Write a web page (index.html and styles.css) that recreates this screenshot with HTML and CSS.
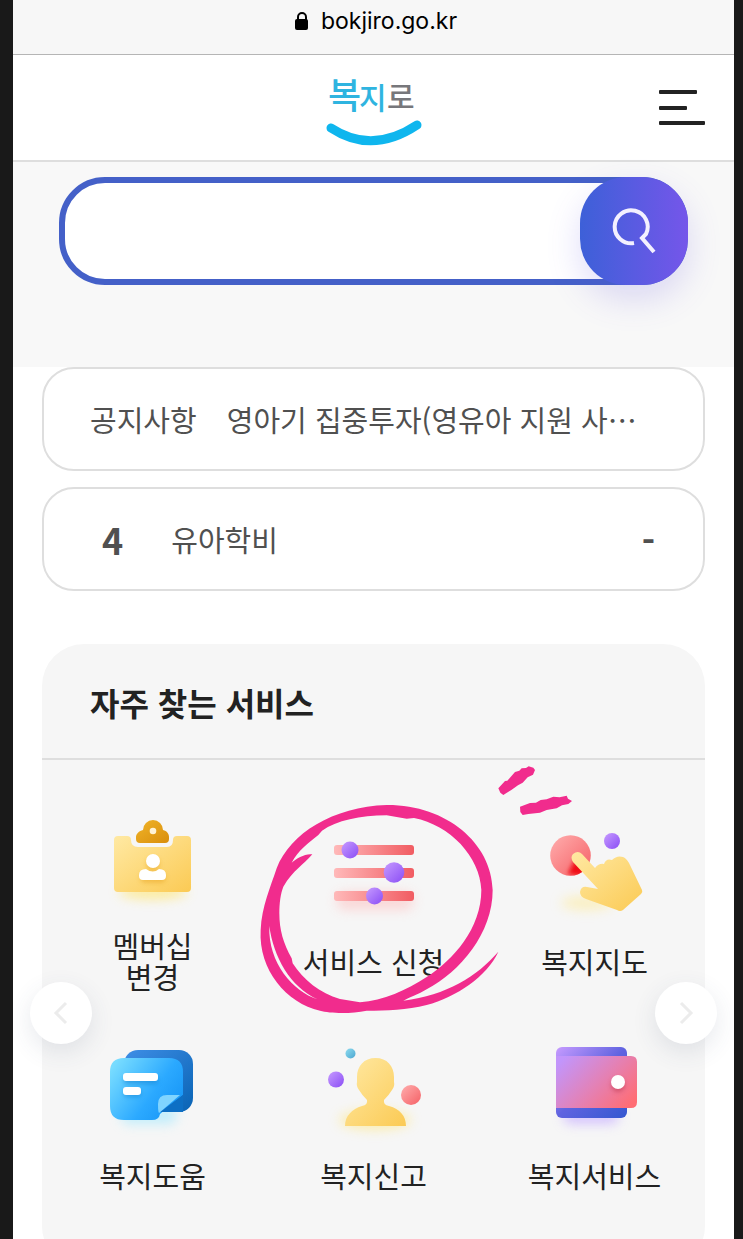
FILE: index.html
```html
<!DOCTYPE html>
<html lang="ko">
<head>
  <meta charset="UTF-8" />
  <meta name="viewport" content="width=device-width, initial-scale=1.0"/>
  <title>복지로</title>
  <link rel="stylesheet" href="styles.css">
</head>
<body>
  <div class="page">
    <div class="address-bar">
      <svg class="lock" viewBox="0 0 14 20" aria-hidden="true">
        <path d="M3 9V6a4 4 0 0 1 8 0v3" fill="none" stroke="#000" stroke-width="2"/>
        <rect x="0" y="8" width="13" height="11" rx="2"/>
      </svg>
      <span>bokjiro.go.kr</span>
    </div>

    <header class="header">
      <a class="logo" href="#" aria-label="복지로">
        <svg viewBox="0 0 96 80">
          <g class="logo-text">
            <text x="2" y="41" font-size="36" fill="#2fb4e0">복</text>
            <text x="33" y="41" font-size="30" fill="#2fb4e0">지</text>
            <text x="61" y="40" font-size="30" fill="#77777b">로</text>
          </g>
          <path d="M5 60Q46 87 91 57" fill="none" stroke="#0fb6ee" stroke-width="9" stroke-linecap="round"/>
        </svg>
      </a>
      <button class="menu" type="button" aria-label="메뉴">
        <svg viewBox="0 0 46 36" fill="#222">
          <rect x="0" y="0" width="38" height="4" rx="1"/>
          <rect x="0" y="16" width="28" height="4" rx="1"/>
          <rect x="0" y="31" width="46" height="4" rx="1"/>
        </svg>
      </button>
    </header>

    <section class="search-area">
      <form class="search">
        <input type="text" aria-label="검색어">
        <button type="button" aria-label="검색">
          <svg viewBox="0 0 44 46" fill="none" stroke="#f3f0ff" stroke-width="4">
            <path d="M22 35A16.500 16.500 0 1 1 34 26L30 30L42 44"/>
          </svg>
        </button>
      </form>
    </section>

    <main>
      <a class="card" href="#">
        <span>공지사항</span>
        <span class="card-text">영아기 집중투자(영유아 지원 사⋯</span>
      </a>
      <a class="card rank" href="#">
        <strong>4</strong>
        <span class="card-text">유아학비</span>
        <strong>-</strong>
      </a>

      <section class="panel">
        <h2>자주 찾는 서비스</h2>
        <div class="services">
          <a class="service" href="#">
            <svg viewBox="0 0 120 120">
              <defs>
                <linearGradient id="yellow" x1="0" y1="0" x2="1" y2="1"><stop offset="0" stop-color="#ffe9a3"/><stop offset="1" stop-color="#fbca54"/></linearGradient>
                <linearGradient id="amber" x1="0" y1="0" x2="1" y2="1"><stop offset="0" stop-color="#f0b429"/><stop offset="1" stop-color="#d98e0c"/></linearGradient>
                <linearGradient id="purple" x1="0" y1="0" x2="1" y2="1"><stop offset="0" stop-color="#c79bff"/><stop offset="1" stop-color="#8a4df5"/></linearGradient>
                <linearGradient id="red" x1="0" y1="0" x2="1" y2="1"><stop offset="0" stop-color="#ffaeae"/><stop offset="1" stop-color="#f56065"/></linearGradient>
                <filter id="blur" x="-50%" y="-100%" width="200%" height="300%"><feGaussianBlur stdDeviation="6"/></filter>
                <filter id="soft" x="-50%" y="-50%" width="200%" height="200%"><feGaussianBlur stdDeviation="2"/></filter>
              </defs>
              <ellipse cx="60" cy="82" rx="34" ry="7" fill="#ffe672" opacity=".7" filter="url(#blur)"/>
              <path d="M25 26H34Q38 26 38 30Q38 37 45 37H74Q80 37 80 30Q80 26 84 26H94Q98 26 98 30V78Q98 82 94 82H25Q21 82 21 78V30Q21 26 25 26Z" fill="url(#yellow)"/>
              <path d="M50 20A10 10 0 0 1 70 20C74 21 76 24 76 27V29Q76 33 72 33H47Q43 33 43 29V27C43 24 46 21 50 20Z" fill="url(#amber)"/>
              <circle cx="60" cy="21" r="3.300" fill="#fff3d6"/>
              <g fill="#e9a520" opacity=".5" filter="url(#soft)"><circle cx="60" cy="54" r="7"/><rect x="47" y="62" width="26" height="11" rx="5"/></g>
              <circle cx="60" cy="51" r="7" fill="#fff"/>
              <path d="M46 65Q46 59 53 59Q60 64 66 59Q73 59 73 65V66Q73 70 69 70H50Q46 70 46 66Z" fill="#fff"/>
            </svg>
            <span>멤버십<br>변경</span>
          </a>

          <a class="service marked" href="#">
            <svg viewBox="0 0 120 120">
              <defs>
                <linearGradient id="bar" x1="0" x2="1"><stop offset="0" stop-color="#ffb9b9"/><stop offset="1" stop-color="#f15c62"/></linearGradient>
              </defs>
              <rect x="22" y="82" width="78" height="18" rx="9" fill="#ffb3b3" opacity=".45" filter="url(#blur)"/>
              <rect x="20" y="35" width="80" height="10" rx="3" fill="url(#bar)"/>
              <rect x="20" y="58" width="80" height="10" rx="3" fill="url(#bar)"/>
              <rect x="20" y="81" width="80" height="10" rx="3" fill="url(#bar)"/>
              <circle cx="36" cy="40" r="8.500" fill="url(#purple)"/>
              <circle cx="80" cy="62.500" r="10.300" fill="url(#purple)"/>
              <circle cx="60.500" cy="86" r="8.500" fill="url(#purple)"/>
            </svg>
            <span>서비스 신청</span>
            <svg class="marker" viewBox="30 -90 990 780" fill="#f12c8d" aria-hidden="true">
              <path fill-rule="evenodd" d="M62 420C65 350 92 290 110 235C150 130 280 50 440 45C620 44 755 160 758 300C758 430 660 545 560 598C535 613 510 622 490 632C620 615 710 560 775 485C740 560 650 620 560 645C500 660 440 662 380 662C330 672 270 670 240 662C140 640 55 540 62 420Z
                M118 370C118 340 122 310 130 290C160 240 190 225 217 193C195 190 170 205 155 218C175 180 205 160 235 135L246 122C290 92 360 76 440 76L500 86L522 84C630 105 720 200 724 300C724 415 640 510 560 561C500 600 430 632 360 637L300 627C240 610 190 570 158 520L155 505C130 460 118 420 118 370Z
                M88 408C100 500 150 590 232 628C160 604 84 520 88 408Z"/>
              <path d="M775 -5L795 -27L802 -28L825 -54L838 -58L845 -65L858 -66L866 -71L880 -67L885 -60L879 -46L863 -38L848 -22L834 -14L814 0L790 15L781 8Z"/>
              <path d="M840 50L870 39L888 38L902 30L920 28L940 20L959 22L980 17L984 26L996 33L985 42L966 46L950 55L920 60L900 68L865 72L848 75L841 66Z"/>
            </svg>
          </a>

          <a class="service" href="#">
            <svg viewBox="0 0 120 120">
              <ellipse cx="52" cy="93" rx="26" ry="7" fill="#ffe98a" opacity=".5" filter="url(#blur)"/>
              <circle cx="35.500" cy="45.500" r="20.300" fill="url(#red)"/>
              <clipPath id="dot"><circle cx="35.500" cy="45.500" r="20.300"/></clipPath>
              <g clip-path="url(#dot)"><path d="M33 64L40 49L60 68Z" fill="#f00d12" filter="url(#soft)"/></g>
              <circle cx="77" cy="31" r="8" fill="url(#purple)"/>
              <path d="M47 44L60 58Q64 53 69 54Q71 48 77 50Q82 45 88 47Q91 48 94 53L107 80Q108 82 106 84L88 100Q85 102 82 100L51 89Q45 87 45 82Q46 76 52 77L63 79L38 52Q35 47 38 44Q43 40 47 44Z" fill="url(#yellow)"/>
            </svg>
            <span>복지지도</span>
          </a>

          <a class="service" href="#">
            <svg viewBox="0 0 120 120">
              <defs>
                <linearGradient id="sky" x1="0" y1="0.200" x2="1" y2="0.800"><stop offset="0" stop-color="#78dcff"/><stop offset=".6" stop-color="#2ba9ff"/><stop offset="1" stop-color="#1694f5"/></linearGradient>
                <linearGradient id="navy" x1="0" y1="0" x2="1" y2="1"><stop offset="0" stop-color="#3f8ee6"/><stop offset="1" stop-color="#0863b4"/></linearGradient>
              </defs>
              <rect x="28" y="82" width="56" height="18" rx="8" fill="#9fe8ff" opacity=".6" filter="url(#blur)"/>
              <rect x="31" y="26" width="69" height="62" rx="14" fill="url(#navy)"/>
              <path d="M31 34H76Q90 34 90 48V71L67 90Q66 96 59 96H31Q17 96 17 82V48Q17 34 31 34Z" fill="url(#sky)"/>
              <path d="M90 71V88H67Z" fill="#0d6fc4"/>
              <path d="M87 71L66 89Q65 88 65 80Q65 71 74 71Z" fill="#80d4ff"/>
              <g fill="#0f7fcf" opacity=".5" filter="url(#soft)"><rect x="31" y="52" width="34" height="8" rx="3"/><rect x="31" y="65" width="17" height="8" rx="3"/></g>
              <rect x="30" y="49" width="35" height="8" rx="3" fill="#fff"/>
              <rect x="30" y="63" width="18" height="8" rx="3" fill="#fff"/>
            </svg>
            <span>복지도움</span>
          </a>

          <a class="service" href="#">
            <svg viewBox="0 0 120 120">
              <defs>
                <linearGradient id="aqua" x1="0" y1="0" x2="1" y2="1"><stop offset="0" stop-color="#8fdcf0"/><stop offset="1" stop-color="#4aa6d0"/></linearGradient>
              </defs>
              <ellipse cx="61" cy="96" rx="36" ry="10" fill="#ffe46e" opacity=".5" filter="url(#blur)"/>
              <circle cx="36.500" cy="29.500" r="5" fill="url(#aqua)"/>
              <circle cx="22" cy="55.500" r="8" fill="url(#purple)"/>
              <circle cx="97" cy="71" r="10" fill="url(#red)"/>
              <path d="M61.500 34C73 34 80 42 80 53V58Q81 62 78 66Q75 71 70 76Q69 81 75 82C86 85 92 92 92 102H31C31 92 38 85 48 82Q54 81 53 76Q48 71 45 66Q42 62 43 58V53C43 42 50 34 61.500 34Z" fill="url(#yellow)"/>
            </svg>
            <span>복지신고</span>
          </a>

          <a class="service" href="#">
            <svg viewBox="0 0 120 120">
              <defs>
                <linearGradient id="wallet" x1="0" y1="0" x2="1" y2="1"><stop offset="0" stop-color="#c79bff"/><stop offset=".5" stop-color="#5f63e0"/><stop offset="1" stop-color="#3457d0"/></linearGradient>
                <linearGradient id="flap" x1="0" y1="0.200" x2="1" y2="0.800"><stop offset="0" stop-color="#c295fb"/><stop offset=".5" stop-color="#e282b8"/><stop offset="1" stop-color="#ff6d74"/></linearGradient>
              </defs>
              <rect x="28" y="84" width="56" height="16" rx="8" fill="#cdb8ff" opacity=".8" filter="url(#blur)"/>
              <rect x="21" y="23" width="71" height="71" rx="6" fill="url(#wallet)"/>
              <path d="M21 32H96Q102 32 102 38V78Q102 84 96 84H21Z" fill="url(#flap)"/>
              <circle cx="83" cy="61" r="7" fill="#b8364e" opacity=".5" filter="url(#soft)"/>
              <circle cx="83" cy="58" r="7" fill="#fff"/>
            </svg>
            <span>복지서비스</span>
          </a>
        </div>

        <button class="arrow prev" type="button" aria-label="이전">
          <svg viewBox="0 0 16 24"><path d="M13 2L3 12L13 22"/></svg>
        </button>
        <button class="arrow next" type="button" aria-label="다음">
          <svg viewBox="0 0 16 24"><path d="M3 2L13 12L3 22"/></svg>
        </button>
      </section>
    </main>
  </div>
</body>
</html>
```
FILE: styles.css
```css
* {
  box-sizing: border-box;
}

body {
  margin: 0;
  padding: 0 9px 0 13px;
  background: #191919;
  color: #222;
  font-family: "Noto Sans CJK KR", "Noto Sans", sans-serif;
  font-size: 29px;
}

a {
  color: inherit;
  text-decoration: none;
}

button {
  padding: 0;
  border: none;
  background: none;
  cursor: pointer;
}

svg {
  display: block;
}

.page {
  height: 100vh;
  overflow: hidden;
  background: #fff;
}

.address-bar {
  display: flex;
  align-items: center;
  justify-content: center;
  gap: 12px;
  height: 55px;
  padding: 0 0 13px 5px;
  background: #f7f7f7;
  border-bottom: 1px solid #b5b5b5;
  color: #000;
  font-family: Inter, sans-serif;
  font-size: 23px;
}

.lock {
  width: 14px;
  height: 20px;
}

.header {
  display: grid;
  grid-template-columns: 1fr auto 1fr;
  align-items: center;
  height: 107px;
  padding: 0 29px;
  border-bottom: 2px solid #dedede;
}

.logo {
  grid-column: 2;
}

.logo svg {
  width: 96px;
  height: 80px;
  overflow: visible;
}

.logo-text {
  font-weight: 500;
}

.menu {
  justify-self: end;
}

.menu svg {
  width: 46px;
  height: 36px;
}

.search-area {
  height: 205px;
  padding: 15px 46px 0;
  background: #f8f8f8;
}

.search {
  display: flex;
  height: 108px;
  border: 6px solid #4460c8;
  border-radius: 46px;
  background: #fff;
}

.search input {
  flex: 1;
  min-width: 0;
  padding: 0 40px;
  border: none;
  border-radius: 40px;
  outline: none;
  background: transparent;
  font: inherit;
}

.search button {
  display: flex;
  align-items: center;
  justify-content: center;
  width: 108px;
  margin: -6px;
  border-radius: 46px;
  background: linear-gradient(to right, #3d60d8, #7556ea);
  box-shadow: 0 14px 34px rgba(98, 84, 224, 0.2);
}

.search button svg {
  width: 44px;
  height: 46px;
}

main {
  padding: 0 29px;
}

.card {
  display: flex;
  align-items: center;
  gap: 30px;
  height: 104px;
  margin-bottom: 16px;
  padding: 0 46px;
  border: 2px solid #dedede;
  border-radius: 32px;
  color: #505050;
}

.card-text {
  flex: 1;
  white-space: nowrap;
}

.card strong {
  font-size: 36px;
  line-height: 48px;
}

.rank {
  gap: 48px;
  padding: 0 48px 0 58px;
}

.panel {
  position: relative;
  margin-top: 53px;
  padding-bottom: 62px;
  border-radius: 42px;
  background: #f6f6f6;
}

.panel h2 {
  margin: 0;
  padding: 35px 48px 33px;
  border-bottom: 2px solid #dedede;
  font-size: 32px;
  line-height: 46px;
}

.services {
  display: grid;
  grid-template-columns: repeat(3, 1fr);
  row-gap: 32px;
  padding-top: 50px;
}

.service {
  display: flex;
  flex-direction: column;
  align-items: center;
  line-height: 31px;
  text-align: center;
}

.service svg {
  width: 120px;
  height: 120px;
}

.service span {
  display: flex;
  align-items: center;
  height: 62px;
}

/* hand-drawn circle round the service */
.marked {
  position: relative;
}

.service .marker {
  position: absolute;
  top: -50px;
  left: -13px;
  z-index: 1;
  width: 330px;
  height: 260px;
  pointer-events: none;
}

.arrow {
  position: absolute;
  top: 338px;
  display: flex;
  align-items: center;
  justify-content: center;
  width: 62px;
  height: 62px;
  border-radius: 50%;
  background: #fff;
  box-shadow: 0 8px 24px rgba(60, 70, 110, 0.12);
}

.arrow svg {
  width: 16px;
  height: 24px;
  fill: none;
  stroke: #ececec;
  stroke-width: 3;
}

.prev {
  left: -12px;
}

.next {
  right: -12px;
}
```
